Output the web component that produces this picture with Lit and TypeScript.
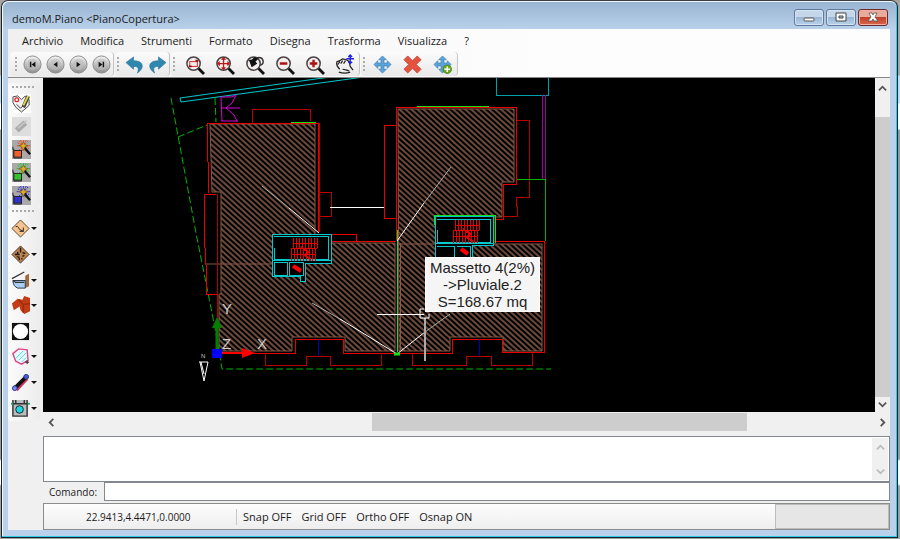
import { LitElement, html, svg, css } from "lit";
import { customElement } from "lit/decorators.js";

const nav = (inner: unknown) => svg`
  <circle cx="10" cy="10" r="9" fill="url(#ball)" stroke="#8a8a8a" stroke-width="1"/>
  <circle cx="10" cy="10" r="6" fill="#bdbdbd" opacity=".6"/>${inner}`;

const lens = (inner: unknown) => svg`
  <path d="M14 14L20 20" stroke="#111" stroke-width="3"/>
  <circle cx="9" cy="9" r="7" fill="#f3eeee" stroke="#4b4343" stroke-width="1.6"/>${inner}`;

const cross = svg`<path d="M10 1l4 4h-2.5v3.5H15V6l4 4-4 4v-2.5h-3.500V15H14l-4 4-4-4h2.500v-3.500H5V14l-4-4 4-4v2.500h3.500V5H6z"
  fill="#5ba3d9" stroke="#4484b8" stroke-width=".8"/>`;

const wand = (fill: string, spark: string) => svg`
  <rect width="20" height="20" fill="#a9a9a9"/>
  <path d="M12 0v12M5 6h14M7 1l10 10M17 1L7 11M9 0l5 12M15 0L9 12M6 3l12 6" stroke="${spark}" stroke-width="1" stroke-dasharray="2 1"/>
  <path d="M1 7v3h1v9h8v-8h1" fill="none" stroke="#222"/>
  <rect x="2" y="11" width="8" height="7" fill="${fill}" stroke="#222"/>
  <path d="M13 8l6 7" stroke="#111" stroke-width="2.500"/>
  <path d="M12 2l1.500 3 3.500 1-3.500 1.500L12 11l-1.500-3.500L7 6l3.500-1z" fill="#e0a92b" stroke="#6b4a10" stroke-width=".6"/>`;

const icons: Record<string, unknown> = {
  first: nav(svg`<path d="M13 7v6l-4-3z" fill="#111"/><path d="M8 7v6" stroke="#111" stroke-width="1.500"/>`),
  prev: nav(svg`<path d="M12 7v6l-4-3z" fill="#111"/>`),
  next: nav(svg`<path d="M8 7v6l4-3z" fill="#111"/>`),
  last: nav(svg`<path d="M7 7v6l4-3z" fill="#111"/><path d="M12 7v6" stroke="#111" stroke-width="1.500"/>`),
  undo: svg`<path d="M1 8L9 2v4c7 0 10 3 9 7-.5 2-2 4-5 6 2-5 1-7-4-7v3z" fill="#2f87b0" stroke="#1f6c93" stroke-width=".6"/>`,
  redo: svg`<path d="M19 8l-8-6v4c-7 0-10 3-9 7 .5 2 2 4 5 6-2-5-1-7 4-7v3z" fill="#2f87b0" stroke="#1f6c93" stroke-width=".6"/>`,
  zoomWindow: lens(svg`<rect x="5" y="7" width="8" height="5" fill="none" stroke="#c22"/><path d="M4 12h3M11 6h3" stroke="#911" stroke-width="2" fill="none"/>`),
  zoomAll: lens(svg`<path d="M9 3v12M3 9h12M7 5l2-2 2 2M7 13l2 2 2-2M5 7L3 9l2 2M13 7l2 2-2 2" stroke="#c01818" stroke-width="1.400" fill="none"/>`),
  zoomPrev: lens(svg`<path d="M4 5l3 8 6-4-2-2 3-3-4-2-3 3z" fill="#111"/><path d="M12 3c8-2 9 6 4 8" fill="none" stroke="#333" stroke-width="1.500"/>`),
  zoomOut: lens(svg`<path d="M5 9h8" stroke="#a11" stroke-width="2.500"/>`),
  zoomIn: lens(svg`<path d="M5 9h8M9 5v8" stroke="#a11" stroke-width="2.500"/>`),
  pan: svg`<path d="M4 18c3 1 7 2 12 0M5 15c-2-2-4-5-3-8l3-1 3-2 4 1 3 2 1 5 3 4M5 7l-2 3M8 6L6 9M11 6L9 9M8 15c3 1 5 0 7 2" fill="none" stroke="#222" stroke-width="1.300"/>
    <path d="M16 0v9M12 4h8M14 2l2-2 2 2M14 7l2 2 2-2" stroke="#22d" stroke-width="1.500" fill="none"/>`,
  move: cross,
  cancel: svg`<path d="M5 1l5 5 5-5 4 4-5 5 5 5-4 4-5-5-5 5-4-4 5-5-5-5z" fill="#e5533f" stroke="#b93c2e" stroke-width=".8"/>`,
  moveAdd: svg`${cross}<circle cx="15" cy="15" r="4.500" fill="#6cab1e" stroke="#477a10" stroke-width=".8"/><path d="M15 12v6M12 15h6" stroke="#fff" stroke-width="1.600"/>`,
  sketch: svg`<rect width="20" height="20" fill="#fff"/><path d="M1 3l5-1 4 4 4-4 4 4v6l-8 7-6-5-3-5z" fill="#f2f2f2" stroke="#444"/><circle cx="5" cy="6" r="2" fill="none" stroke="#d22" stroke-width="1.300"/>
    <path d="M17 2l-5 12" stroke="#444" stroke-width="4"/><path d="M17 2l-5 10" stroke="#e6d83a" stroke-width="2"/><path d="M5 11l4 4 2-2" stroke="#333" fill="none"/>`,
  eraser: svg`<rect width="20" height="20" fill="#ddd"/><path d="M5 14L14 6" stroke="#aaa" stroke-width="6"/><path d="M6 12l9-8" stroke="#c4c4c4" stroke-width="2"/>`,
  wandRed: wand("#f2602c", "#f04a1c"),
  wandGreen: wand("#33c22e", "#19c224"),
  wandBlue: wand("#3432cf", "#2727e0"),
  slope: svg`<path d="M10 1l9 9-9 9-9-9z" fill="#f7c490" stroke="#5b422b"/><path d="M5 8c3-1 3 2 4 3l4 2M13 9v4h-4" fill="none" stroke="#222"/>`,
  slopes: svg`<path d="M10 1l9 9-9 9-9-9z" fill="#b98552" stroke="#4b331f"/><path d="M10 3v5M4 10h5M7 7v3M12 8l3 1M8 12l1 4M12 12l2-1M11 14l1 1M6 12l1 1" fill="none" stroke="#2b1508" stroke-width="1.500"/>`,
  gutter: svg`<path d="M15 5l4-2v13l-4 2z" fill="#a06a3c"/><path d="M2 10h13v8H7c-3-1-5-4-5-8z" fill="#a9cff5" stroke="#234"/><path d="M1 8l13-7M2 10l3 2h9" stroke="#333" stroke-width="1.300" fill="none"/>`,
  roof: svg`<path d="M1 8l6-5 5 1 2-4 6 2v14l-6 3-4-4-1-4-6 4z" fill="#c23c16"/><path d="M8 4l5 5 7-1M13 9v9" stroke="#9d2b0c" fill="none" stroke-width="1.500"/>`,
  hole: svg`<rect x="1" y="1" width="18" height="18" fill="#111"/><circle cx="10" cy="10" r="8" fill="#fff"/>`,
  polygon: svg`<path d="M2 7l6-5 9 1 1 11-7 4-6-3z" fill="#e6fbfd" stroke="#e14486" stroke-width="1.500"/><path d="M5 12l8-8M8 14l8-8M11 16l5-5" stroke="#4dd" /><path d="M15 16h4M17 14v4" stroke="#222"/>`,
  pipe: svg`<path d="M6 18L17 6" stroke="#d2335e" stroke-width="3"/><path d="M4 16L16 4" stroke="#111" stroke-width="4"/><circle cx="4" cy="16" r="2.500" fill="#7a8cf0" stroke="#238"/><circle cx="16" cy="4" r="2.500" fill="#4a5cd0" stroke="#238"/>`,
  drain: svg`<path d="M2 1v17h15V1M5 1v4h9V1M2 5h15" fill="#b9bdbd" stroke="#333" stroke-width="1.500"/><path d="M0 5h2M18 5h2" stroke="#2a7" stroke-width="2"/><circle cx="9" cy="11" r="4" fill="#18d8dc" stroke="#223"/>`,
};

const icon = (name: string) => html`<svg class="icon" viewBox="0 0 20 20" aria-hidden="true">
  <defs><linearGradient id="ball" x1="0" y1="0" x2="0" y2="1"><stop offset="0" stop-color="#f4f4f4"/><stop offset="1" stop-color="#8d8d8d"/></linearGradient></defs>
  ${icons[name]}</svg>`;

const chevron = (d: string) => html`<svg class="chev" viewBox="0 0 10 10" aria-hidden="true"><path d="${d}" fill="none" stroke="currentColor" stroke-width="2"/></svg>`;
const UP = "M1 7l4-4 4 4", DOWN = "M1 3l4 4 4-4", LEFT = "M7 1L3 5l4 4", RIGHT = "M3 1l4 4-4 4";

@customElement("cad-drawing")
export class CadDrawing extends LitElement {
  static styles = css`
    :host { display: block; min-width: 0; min-height: 0; overflow: hidden; position: relative; background: #000; }
    .plan { display: block; width: 100%; height: 100%; fill: none; stroke-width: 1; font: 15px "Liberation Sans", Arial, sans-serif; }
    .crisp { shape-rendering: crispEdges; }
    .red { stroke: #e80000; }
    .dark { stroke: #b80000; }
    .green { stroke: #00b400; }
    .lime { stroke: #18e018; }
    .dash { stroke-dasharray: 7 3; }
    .cyan { stroke: #00c8cc; }
    .teal { stroke: #00a0a8; }
    .magenta { stroke: #d800d8; }
    .purple { stroke: #9a009a; }
    .blue { stroke: #0000b8; }
    .white { stroke: #fff; }
    .grey { stroke: #aaa; }
    .brown { stroke: #8a5847; }
    .hatch { fill: url(#hatch); stroke: #8a5847; }
    .void { fill: #000; }
    .axis { fill: #ccc; }
    .tip { position: absolute; left: 382px; top: 179px; width: 115px; box-sizing: border-box; padding: 1px 0; background: #f5f5f5; border: 1px solid #fff; color: #222;
      font: 15px/17px "Liberation Sans", Arial, sans-serif; text-align: center; white-space: nowrap; }
  `;

  private stairs(x: number, y: number) {
    return svg`<g class="red crisp">
      ${Array.from({ length: 9 }, (_, i) => svg`<path d="M${x + i * 3} ${y}v10M${x - 2 + i * 3} ${y + 11}v12"/>`)}
      <path d="M${x} ${y + 5}h25M${x - 2} ${y + 10}h26M${x - 2} ${y + 16}h24"/>
      <path stroke-width="2" d="M${x + 8} ${y + 9}l7 5 -3 3 6 5"/></g>`;
  }

  render() {
    return html`
      <svg class="plan" viewBox="43 78 832 334" preserveAspectRatio="xMinYMin slice" role="img" aria-label="PianoCopertura">
        <defs>
          <pattern id="hatch" width="8" height="4" patternUnits="userSpaceOnUse" patternTransform="rotate(42)">
            <path d="M0 2H8" stroke="#d69478" stroke-width="1"/>
          </pattern>
        </defs>

        <path class="hatch" d="M210 124H315V243H395V351H345V337H292V351H219V294H221V192H212Z"/>
        <path class="hatch" d="M398 109H514V182H502V217H494V244H542V351H503V337H450V351H399Z"/>
        <path class="brown" d="M206 264H271M398 244H434"/>

        <g class="green dash">
          <path d="M171 98L196 233L215 328L222 369H551M178 137L207 125M215 98L216 122"/>
        </g>
        <g class="cyan">
          <path d="M330 77L180 98L181 102L364 77"/>
          <path class="teal crisp" d="M496 77V95H548V77"/>
        </g>
        <g class="magenta">
          <path d="M221 97H231L236 95L232 103L226 108L234 115L237 121M221 97L222 121M221 108H240M221 121H238"/>
          <path class="purple crisp" d="M542 95V180M545 95V180"/>
        </g>

        <g class="red crisp">
          <path d="M209 193L207 130V123H318V232M216 194H204V230L206 265V294H217V353H295V339H343V353H397"/>
          <path class="dark" d="M217 194V352M319 123V232"/>
          <path class="dark" d="M252 123V109H310V121M318 192H331V216H318"/>
          <path d="M331 234H356V241M331 241H396"/>
          <path d="M396 240V107H516V184H503V219H495M396 125H384V171L385 218H396"/>
          <path class="dark" d="M517 120H529V197H516V206H517V216H504"/>
          <path d="M494 241H544V352H502V339H452V353H398"/>
          <path class="dark" d="M265 353V365H306V356H330V365H381V353M412 354V365H466V356H491V365H532V353"/>
        </g>
        <path class="blue crisp" d="M318 339V356M479 339V356"/>
        <path class="lime crisp" d="M291 122H316M417 106H489M397 230V352"/>
        <path class="green crisp" d="M517 179H545V241"/>
        <path class="brown crisp" d="M400 243V350"/>

        <g class="cyan crisp">
          <path class="void" d="M272 234H331V263H305V281H300V276H272Z"/>
          <path d="M274 236H328V259H274V248M274 262H287V275H274ZM289 262H303V275H289ZM272 260H331"/>
          <path class="void" d="M435 216H493V245H472V262H435Z"/>
          <path d="M437 219H490V242H437V230M437 246H454V262M457 246H470V262M435 243H493"/>
          <path class="lime" d="M434 215H495V243M434 215V225"/>
        </g>
        ${this.stairs(293, 238)}
        ${this.stairs(455, 220)}
        <path stroke="#f00" stroke-width="4" d="M293 266l8 5M461 249l7 5"/>

        <g class="white">
          <path class="grey" d="M262 186L289 208M312 303L340 319M425 332L450 314"/>
          <path d="M289 208L319 233M397 241L424 203M340 319L397 354L425 332"/>
          <path class="grey" d="M424 203L451 167"/>
          <path class="crisp" d="M330 207H384M377 314H424"/>
          <path class="grey crisp" stroke-width="2" d="M425 318V361"/>
          <path d="M424 309H420V318H429V314"/>
          <path d="M199 362H208L204 381L200 362M201 362L204 374"/>
        </g>
        <path d="M394 354h6" class="lime" stroke-width="3"/>

        <g class="axis">
          <text x="222" y="314">Y</text>
          <text x="222" y="349">Z</text>
          <text x="257" y="349">X</text>
          <text x="201" y="358" font-size="6">N</text>
        </g>
        <path d="M217 327V350" stroke="#008000" stroke-width="3"/>
        <path d="M212 328H222L217 317Z" fill="#008000"/>
        <path d="M222 353H243" stroke="#f00" stroke-width="2"/>
        <path d="M242 348V358L255 353Z" fill="#f00"/>
        <rect x="212" y="349" width="10" height="9" fill="#00f"/>
      </svg>
      <div class="tip" role="tooltip">Massetto 4(2%)<br>-&gt;Pluviale.2<br>S=168.67 mq</div>`;
  }
}

@customElement("app-root")
export class AppRoot extends LitElement {
  static styles = css`
    :host { display: block; height: 100vh; box-sizing: border-box; padding: 0 2px 1px 1px; color: #1b1b1b;
      font: 11px/16px "Open Sans", "Noto Sans", sans-serif;
      background: linear-gradient(#aaa49e 75px, #c5d9ec 76px 103px, #fff 104px 129px, #999 130px 459px, #fff 461px 484px, #a0a0a0 486px); }
    * { box-sizing: border-box; }
    button { font: inherit; color: inherit; background: none; border: 0; padding: 0; margin: 0; display: flex; align-items: center; justify-content: center; }
    .window { height: 100%; display: flex; flex-direction: column; border: 1px solid #16222c; border-top-color: #3b3b45; border-radius: 7px 7px 0 0;
      background: #b9d1ea; overflow: hidden; box-shadow: inset -1px -1px #2ccbe8, inset 1px 1px #f4f9ff; }
    .title { flex: none; display: flex; align-items: center; justify-content: space-between; height: 27px; margin: 1px 1px 0; padding: 0 8px 0 9px;
      background: linear-gradient(#99b4d1, #b9d1ea); border-radius: 6px 6px 0 0; }
    .title h1 { margin: 0; padding-top: 6px; font: inherit; }
    .caption { display: flex; gap: 2px; padding-top: 4px; }
    .cap { width: 30px; height: 17px; border: 1px solid #60799b; border-radius: 3px; background: linear-gradient(#c3d6ea 45%, #9ab6d4 50%, #b9d3ec); box-shadow: inset 0 0 0 1px #d5e4f3; }
    .close { border-color: #6b2a2a; background: linear-gradient(#e9a99b 45%, #c0402a 50%, #d9694c); box-shadow: inset 0 0 0 1px #eeb3a6; }
    .glyph { width: 12px; height: 11px; }
    .body { flex: 1; min-height: 0; display: grid; grid-template-columns: 35px minmax(0, 1fr); grid-template-rows: 49px minmax(0, 1fr); margin: 0 7px 7px 6px; background: #f0f0f0; }
    .top { grid-column: 1 / 3; background: linear-gradient(90deg, #f0f0f0, #fdfdfd 60%); border-bottom: 1px solid #888; }
    .menu { display: flex; gap: 17px; height: 23px; padding-left: 14px; align-items: center; }
    .bars { display: flex; gap: 1px; padding-left: 2px; height: 24px; }
    .bar { display: flex; align-items: center; background: linear-gradient(#fbfbfb, #e9e9e9); border-right: 1px solid #c4c4c4; border-radius: 4px; }
    .grip { width: 2px; height: 14px; margin: 0 4px 0 2px; background: repeating-linear-gradient(#aaa 0 2px, transparent 2px 4px); }
    .edit .grip { margin: 0 2px 0 2px; }
    .tool { width: 30px; height: 24px; }
    .tight .tool { width: 23px; }
    .nav .grip { margin: 0 4px 0 5px; }
    .icon { width: 19px; height: 19px; display: block; overflow: visible; }
    .side { padding-top: 5px; }
    .panel { width: 32px; padding-top: 3px; background: linear-gradient(90deg, #fbfbfb, #ececec); border-radius: 4px; }
    .hgrip { width: 22px; height: 2px; margin: 0 0 4px 4px; background: repeating-linear-gradient(90deg, #aaa 0 2px, transparent 2px 4px); }
    .panel .tool { width: 26px; height: 23px; }
    .drops { display: grid; grid-auto-rows: 1fr; height: 205px; }
    .drop { justify-content: flex-start; gap: 1px; padding-left: 3px; }
    .caret { border: 3px solid transparent; border-top-color: #111; border-bottom: 0; }
    .work { display: flex; flex-direction: column; min-width: 0; min-height: 0; }
    .view { flex: 1; min-height: 0; display: grid; grid-template-columns: minmax(0, 1fr) 15px; grid-template-rows: minmax(0, 1fr); }
    .chev { width: 9px; height: 9px; color: #555; }
    .vbar { display: flex; flex-direction: column; background: #f0f0f0; }
    .vbar button { height: 20px; }
    .vbar .end { height: 15px; }
    .thumb { background: #cdcdcd; }
    .vbar .thumb { flex: 1; margin-top: 19px; }
    .hbar { flex: none; display: flex; height: 19px; margin-top: 1px; }
    .hbar button { width: 16px; }
    .track { flex: 1; padding: 0 15% 0 37%; }
    .track .thumb { height: 18px; }
    .log { flex: none; display: flex; margin-top: 4px; height: 46px; border: 1px solid #828790; background: #fff; padding: 1px; }
    textarea { flex: 1; min-width: 0; border: 0; padding: 2px; resize: none; outline: 0; font: inherit; background: #fff; overflow: hidden; }
    .logbar { width: 16px; display: flex; flex-direction: column; justify-content: space-between; background: #f0f0f0; }
    .logbar button { height: 18px; }
    .logbar .chev { color: #bcbcbc; }
    .command { flex: none; display: flex; align-items: center; height: 19px; }
    .command label { width: 61px; padding-left: 6px; font-size: 10px; }
    .command input { flex: 1; min-width: 0; height: 19px; border: 1px solid #828790; padding: 0 3px; background: #fff; font: inherit; outline: 0; }
    .status { flex: none; display: flex; align-items: center; height: 27px; margin-top: 2px; border: 1px solid #8c8c8c; background: linear-gradient(#fdfdfd, #eee); }
    .coords { width: 193px; padding-left: 42px; height: 16px; border-right: 1px solid #c8c8c8; font-size: 10px; }
    .modes { display: flex; gap: 10px; padding-left: 6px; flex: 1; }
    .progress { width: 114px; height: 25px; background: #e6e6e6; border: 1px solid #bcbcbc; }
  `;

  private tool(name: string) {
    return html`<button class="tool" aria-label="${name}">${icon(name)}</button>`;
  }

  private bar(kind: string, names: string[]) {
    return html`<div class="bar ${kind}" role="toolbar"><span class="grip"></span>${names.map((n) => this.tool(n))}</div>`;
  }

  render() {
    return html`
      <div class="window">
        <header class="title">
          <h1>demoM.Piano &lt;PianoCopertura&gt;</h1>
          <div class="caption">
            <button class="cap" aria-label="Minimize"><svg class="glyph" viewBox="0 0 12 11"><rect x="1" y="6" width="10" height="3" rx="1" fill="#fff" stroke="#555"/></svg></button>
            <button class="cap" aria-label="Maximize"><svg class="glyph" viewBox="0 0 12 11"><path fill-rule="evenodd" d="M1 1h10v8H1zM4 4v2h4V4z" fill="#fff" stroke="#444"/></svg></button>
            <button class="cap close" aria-label="Close"><svg class="glyph" viewBox="0 0 12 11"><path d="M2 1h3l1 2 1-2h3L8 5l3 4H7L6 7 5 9H1l3-4z" fill="#fff" stroke="#555" stroke-width=".8"/></svg></button>
          </div>
        </header>
        <div class="body">
          <div class="top">
            <nav class="menu">
              ${["Archivio", "Modifica", "Strumenti", "Formato", "Disegna", "Trasforma", "Visualizza", "?"].map((m) => html`<button>${m}</button>`)}
            </nav>
            <div class="bars">
              ${this.bar("nav tight", ["first", "prev", "next", "last"])}
              ${this.bar("tight", ["undo", "redo"])}
              ${this.bar("", ["zoomWindow", "zoomAll", "zoomPrev", "zoomOut", "zoomIn", "pan"])}
              ${this.bar("edit", ["move", "cancel", "moveAdd"])}
            </div>
          </div>
          <aside class="side">
            <div class="panel" role="toolbar">
              <div class="hgrip"></div>
              ${["sketch", "eraser", "wandRed", "wandGreen", "wandBlue"].map((n) => this.tool(n))}
            </div>
            <div class="panel" role="toolbar">
              <div class="hgrip"></div>
              <div class="drops">
                ${["slope", "slopes", "gutter", "roof", "hole", "polygon", "pipe", "drain"].map(
                  (n) => html`<button class="drop" aria-label="${n}">${icon(n)}<span class="caret"></span></button>`)}
              </div>
            </div>
          </aside>
          <main class="work">
            <div class="view">
              <cad-drawing></cad-drawing>
              <div class="vbar">
                <button aria-label="Scroll up">${chevron(UP)}</button>
                <div class="thumb"></div>
                <button class="end" aria-label="Scroll down">${chevron(DOWN)}</button>
              </div>
            </div>
            <div class="hbar">
              <button aria-label="Scroll left">${chevron(LEFT)}</button>
              <div class="track"><div class="thumb"></div></div>
              <button aria-label="Scroll right">${chevron(RIGHT)}</button>
            </div>
            <div class="log">
              <textarea aria-label="Output" readonly></textarea>
              <div class="logbar">
                <button aria-label="Scroll up">${chevron(UP)}</button>
                <button aria-label="Scroll down">${chevron(DOWN)}</button>
              </div>
            </div>
            <div class="command"><label for="cmd">Comando:</label><input id="cmd" type="text"></div>
            <footer class="status">
              <div class="coords">22.9413,4.4471,0.0000</div>
              <div class="modes"><span>Snap OFF</span><span>Grid OFF</span><span>Ortho OFF</span><span>Osnap ON</span></div>
              <div class="progress"></div>
            </footer>
          </main>
        </div>
      </div>`;
  }
}
